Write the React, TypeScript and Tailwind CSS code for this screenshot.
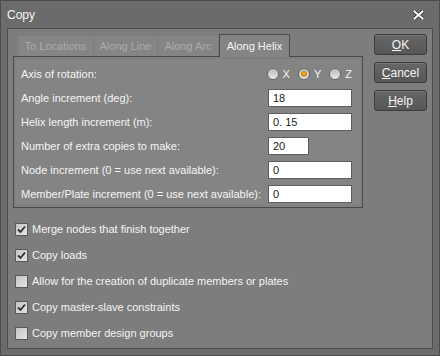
import type { ReactNode } from 'react';

const font = { fontFamily: '"Liberation Sans", Arial, sans-serif' };

const fields = [
  { label: 'Angle increment (deg):', value: '18', wide: true },
  { label: 'Helix length increment (m):', value: '0. 15', wide: true },
  { label: 'Number of extra copies to make:', value: '20', wide: false },
  { label: 'Node increment (0 = use next available):', value: '0', wide: true },
  { label: 'Member/Plate increment (0 = use next available):', value: '0', wide: true },
];

const options = [
  { label: 'Merge nodes that finish together', checked: true },
  { label: 'Copy loads', checked: true },
  { label: 'Allow for the creation of duplicate members or plates', checked: false },
  { label: 'Copy master-slave constraints', checked: true },
  { label: 'Copy member design groups', checked: false },
];

const Radio = ({ label, on }: { label: string; on?: boolean }) => (
  <div className="flex items-center gap-[4px]">
    <span className="w-[12px] h-[12px] rounded-full border border-[#6a6a6a] bg-gradient-to-b from-[#bdbdbd] to-[#e6e6e6] flex items-center justify-center">
      {on && <span className="w-[6px] h-[6px] rounded-full bg-[#f2a516] border border-[#c57d06]" />}
    </span>
    <span>{label}</span>
  </div>
);

const Check = ({ on }: { on: boolean }) => (
  <span className="w-[13px] h-[13px] border border-[#5a5a5a] bg-gradient-to-br from-[#c4c4c4] to-[#e4e4e4] flex items-center justify-center">
    {on && (
      <svg width="9" height="9" viewBox="0 0 9 9">
        <path d="M1 4.5 L3.5 7 L8 1.5" stroke="#2e2e2e" strokeWidth="1.8" fill="none" />
      </svg>
    )}
  </span>
);

const Button = ({ children }: { children: ReactNode }) => (
  <button className="w-[53px] h-[21px] rounded-[3px] border border-[#3c3c3c] bg-gradient-to-b from-[#666] to-[#575757] text-[#f4f4f4] text-[12px] leading-none shadow-[inset_0_1px_0_#777]">
    {children}
  </button>
);

const tabs = [
  { label: 'To Locations', w: 'w-[75px]' },
  { label: 'Along Line', w: 'w-[63px]' },
  { label: 'Along Arc', w: 'w-[60px]' },
];

export default function App() {
  return (
    <div
      style={font}
      className="w-[440px] h-[356px] bg-[#6b6b6b] border border-[#4c4c4c] text-[11px] text-[#f4f4f4] flex flex-col"
    >
      <div className="h-[27px] flex items-center justify-between pl-[6px] pr-[15px] text-[12px]">
        <span>Copy</span>
        <svg width="11" height="10" viewBox="0 0 11 10">
          <path d="M1.5 1.5 L9.5 8.5 M9.5 1.5 L1.5 8.5" stroke="#333" strokeWidth="3.6" strokeLinecap="square" />
          <path d="M1.5 1.5 L9.5 8.5 M9.5 1.5 L1.5 8.5" stroke="#fff" strokeWidth="2" strokeLinecap="square" />
        </svg>
      </div>
      <div className="mx-[6px] mb-[6px] flex-1 border border-[#4e4e4e] bg-[#7d7d7d] flex">
        <div className="w-[356px] pl-[5px] pt-[4px] flex flex-col">
          <div className="flex items-end pl-[5px] h-[23px]">
            {tabs.map((t) => (
              <div
                key={t.label}
                className={`${t.w} h-[20px] mr-px bg-[#858585] text-[#ababab] flex items-center justify-center`}
              >
                {t.label}
              </div>
            ))}
            <div className="w-[71px] h-[23px] border border-b-0 border-[#4a4a4a] bg-[#848484] text-[#f4f4f4] flex items-center justify-center -mb-px relative z-10">
              Along Helix
            </div>
          </div>
          <div className="w-[350px] h-[152px] border border-[#4a4a4a] bg-[#7f7f7f] p-[2px]">
            <div className="h-full bg-[#848484] pl-[5px] pr-[8px] pt-[3px]">
              <div className="h-[24px] flex items-center justify-between">
                <span>Axis of rotation:</span>
                <div className="flex items-center gap-[8px]">
                  <Radio label="X" />
                  <Radio label="Y" on />
                  <Radio label="Z" />
                </div>
              </div>
              {fields.map((f) => (
                <div key={f.label} className="h-[24px] flex items-center justify-between whitespace-nowrap">
                  <span>{f.label}</span>
                  <div className="w-[84px]">
                    <div
                      className={`${f.wide ? 'w-[84px]' : 'w-[41px]'} h-[18px] bg-white border border-[#5e5e5e] text-[#1a1a1a] pl-[4px] flex items-center`}
                    >
                      {f.value}
                    </div>
                  </div>
                </div>
              ))}
            </div>
          </div>
          <div className="pt-[8px] pl-[2px] flex flex-col">
            {options.map((o) => (
              <label key={o.label} className="h-[26px] flex items-center gap-[4px]">
                <Check on={o.checked} />
                <span>{o.label}</span>
              </label>
            ))}
          </div>
        </div>
        <div className="pt-[5px] pl-[10px] flex flex-col gap-[7px]">
          <Button>
            <u>O</u>K
          </Button>
          <Button>
            <u>C</u>ancel
          </Button>
          <Button>
            <u>H</u>elp
          </Button>
        </div>
      </div>
    </div>
  );
}
